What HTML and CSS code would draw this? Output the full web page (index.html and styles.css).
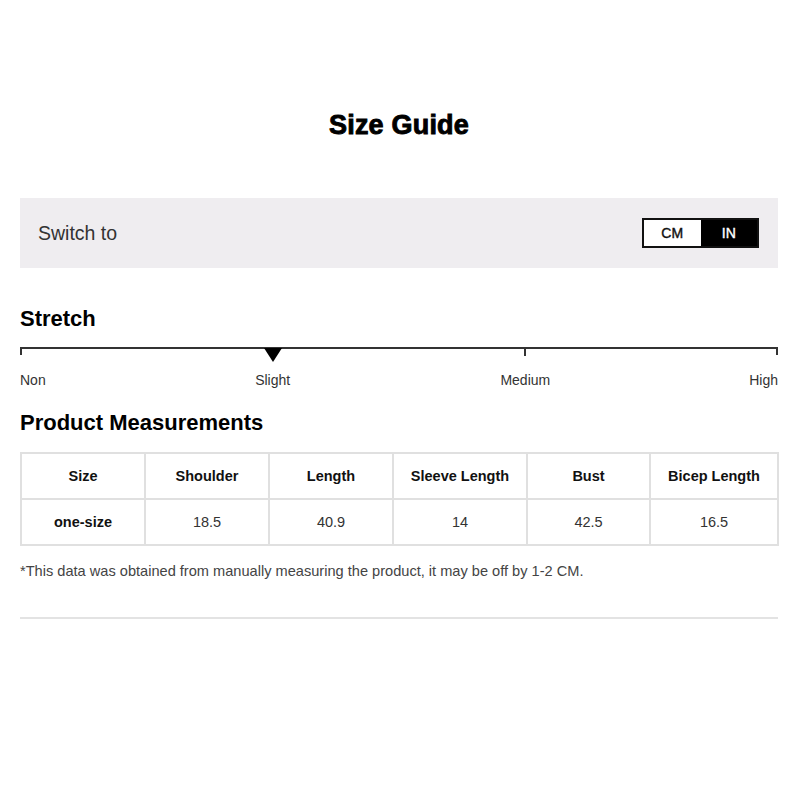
FILE: index.html
```html
<!DOCTYPE html>
<html>
<head>
<meta charset="utf-8">
<link rel="stylesheet" href="styles.css">
</head>
<body>
<div class="page">
  <h1 class="title">Size Guide</h1>
  <div class="switch-bar">
    <span class="switch-label">Switch to</span>
    <div class="toggle">
      <span class="toggle-opt">CM</span>
      <span class="toggle-opt active">IN</span>
    </div>
  </div>
  <h2 class="section-title stretch-title">Stretch</h2>
  <div class="scale">
    <div class="track">
      <span class="tick tick-medium"></span>
      <span class="marker"></span>
    </div>
    <div class="scale-labels">
      <span class="lbl lbl-non">Non</span>
      <span class="lbl lbl-slight">Slight</span>
      <span class="lbl lbl-medium">Medium</span>
      <span class="lbl lbl-high">High</span>
    </div>
  </div>
  <h2 class="section-title measure-title">Product Measurements</h2>
  <table class="sizes">
    <colgroup>
      <col class="c-std"><col class="c-std"><col class="c-std"><col class="c-wide"><col class="c-bust"><col class="c-bicep">
    </colgroup>
    <thead>
      <tr>
        <th>Size</th><th>Shoulder</th><th>Length</th><th>Sleeve Length</th><th>Bust</th><th>Bicep Length</th>
      </tr>
    </thead>
    <tbody>
      <tr>
        <td class="size-name">one-size</td><td>18.5</td><td>40.9</td><td>14</td><td>42.5</td><td>16.5</td>
      </tr>
    </tbody>
  </table>
  <p class="note">*This data was obtained from manually measuring the product, it may be off by 1-2 CM.</p>
  <hr class="divider">
</div>
</body>
</html>
```

FILE: styles.css
```css
* { box-sizing: border-box; }
html, body { margin: 0; padding: 0; background: #fff; }
body { font-family: "Liberation Sans", Arial, sans-serif; color: #222; }
.page { padding: 110px 22px 0 20px; }
.title {
  margin: 0;
  font-size: 27px;
  line-height: 30px;
  font-weight: 700;
  text-align: center;
  color: #000;
  -webkit-text-stroke: 0.9px #000;
  letter-spacing: 0.2px;
}
.switch-bar {
  margin-top: 58px;
  height: 70px;
  background: #efedf0;
  display: flex;
  align-items: center;
  justify-content: space-between;
  padding: 0 19px 0 18px;
}
.switch-label { font-size: 19.5px; color: #333; }
.toggle {
  display: flex;
  width: 117px;
  height: 30px;
  border: 2px solid #111;
}
.toggle-opt {
  flex: 1;
  display: flex;
  align-items: center;
  justify-content: center;
  font-size: 14px;
  font-weight: 700;
  color: #111;
  background: #fff;
  -webkit-text-stroke: 0.1px;
}
.toggle-opt { font-weight: 400; -webkit-text-stroke: 0.4px; }
.toggle-opt.active { background: #000; color: #fff; }
.section-title {
  margin: 0;
  font-size: 22px;
  line-height: 26px;
  font-weight: 700;
  color: #000;
}
.stretch-title { margin-top: 38px; }
.scale { margin-top: 15px; }
.track {
  position: relative;
  height: 8px;
  border-top: 2px solid #333;
  border-left: 2px solid #333;
  border-right: 2px solid #333;
}
.tick-medium {
  position: absolute;
  left: 66.67%;
  top: 0;
  width: 2px;
  height: 7px;
  background: #333;
  margin-left: -1px;
}
.marker {
  position: absolute;
  left: 33.33%;
  top: -1px;
  margin-left: -9px;
  width: 0;
  height: 0;
  border-left: 9px solid transparent;
  border-right: 9px solid transparent;
  border-top: 14px solid #000;
}
.scale-labels {
  display: grid;
  grid-template-columns: repeat(6, 1fr);
  margin-top: 16px;
  font-size: 14px;
  line-height: 18px;
  color: #333;
}
.lbl-non { grid-column: 1; text-align: left; }
.lbl-slight { grid-column: 2 / 4; text-align: center; }
.lbl-medium { grid-column: 4 / 6; text-align: center; }
.lbl-high { grid-column: 6; text-align: right; }
.measure-title { margin-top: 21px; }
.sizes {
  margin-top: 16px;
  width: 100%;
  border-collapse: collapse;
  table-layout: fixed;
  font-size: 14.5px;
}
.c-std { width: 124px; }
.c-wide { width: 134px; }
.c-bust { width: 123px; }
.c-bicep { width: 128px; }
.sizes th, .sizes td {
  border: 2px solid #e0e0e0;
  height: 46px;
  text-align: center;
  padding: 0 4px;
}
.sizes th { font-weight: 700; color: #111; }
.sizes td { color: #333; }
.sizes td.size-name { font-weight: 700; color: #111; }
.note {
  margin: 16px 0 0;
  font-size: 14.6px;
  line-height: 18px;
  color: #444;
}
.divider {
  margin: 37px 0 0;
  border: 0;
  height: 2px;
  background: #e3e3e3;
}
```
